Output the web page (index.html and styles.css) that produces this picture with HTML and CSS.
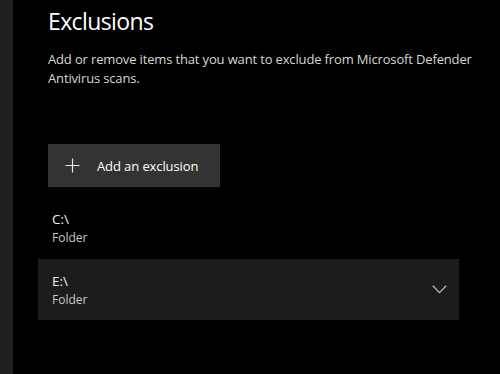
FILE: index.html
```html
<!DOCTYPE html>
<html lang="en">
<head>
    <meta charset="UTF-8">
    <meta name="viewport" content="width=device-width, initial-scale=1.0">
    <title>Exclusions</title>
    <link rel="stylesheet" href="styles.css">
</head>
<body>
    <div class="page">
        <div class="side-strip"></div>

        <div class="content">
            <h1>Exclusions</h1>
            <p class="description">Add or remove items that you want to exclude from Microsoft Defender Antivirus scans.</p>

            <button class="add-exclusion">
                <svg class="plus-icon" width="15" height="15" viewBox="0 0 15 15">
                    <path d="M7.5 0.5 V14.5 M0.5 7.5 H14.5" stroke="#e6e6e6" stroke-width="1.2" fill="none"/>
                </svg>
                <span>Add an exclusion</span>
            </button>

            <div class="exclusion-list">
                <div class="exclusion">
                    <div class="exclusion-text">
                        <div class="exclusion-path">C:\</div>
                        <div class="exclusion-type">Folder</div>
                    </div>
                </div>
                <div class="exclusion selected">
                    <div class="exclusion-text">
                        <div class="exclusion-path">E:\</div>
                        <div class="exclusion-type">Folder</div>
                    </div>
                    <svg class="chevron" width="15" height="9" viewBox="0 0 15 9">
                        <path d="M0.8 0.8 L7.5 7.6 L14.2 0.8" stroke="#bdbdbd" stroke-width="1.3" fill="none"/>
                    </svg>
                </div>
            </div>
        </div>
    </div>
</body>
</html>
```

FILE: styles.css
```css
html, body {
    margin: 0;
    padding: 0;
    background: #000;
    overflow: hidden;
}
body {
    font-family: "Open Sans", "Noto Sans", sans-serif;
    color: #fff;
}
.page {
    display: flex;
    height: 374px;
}
.side-strip {
    width: 13px;
    flex-shrink: 0;
    background: #1f1f1f;
}
.content {
    flex: 1;
    padding-left: 35px;
}
.content h1 {
    margin: 4px 0 0;
    font-size: 23px;
    font-weight: 400;
    line-height: 34px;
    letter-spacing: -0.6px;
}
.description {
    margin: 12px 0 0;
    width: 430px;
    font-size: 13px;
    line-height: 19px;
    letter-spacing: -0.15px;
    color: #d6d6d6;
}
.add-exclusion {
    display: flex;
    align-items: center;
    margin-top: 56px;
    width: 172px;
    height: 43px;
    padding: 0 0 0 17px;
    background: #333;
    border: none;
    color: #fff;
    font-family: inherit;
    font-size: 13px;
    letter-spacing: -0.1px;
    cursor: pointer;
}
.plus-icon {
    margin-right: 17px;
}
.exclusion-list {
    margin-top: 10px;
    margin-left: -10px;
    width: 421px;
}
.exclusion {
    display: flex;
    align-items: center;
    height: 61px;
    padding: 0 12px 0 14px;
    margin-bottom: 1px;
}
.exclusion.selected {
    background: #1c1c1c;
}
.exclusion-text {
    flex: 1;
}
.exclusion-path {
    font-size: 13.5px;
    line-height: 19px;
    color: #f0f0f0;
}
.exclusion-type {
    font-size: 12px;
    line-height: 17px;
    color: #c8c8c8;
}
```
